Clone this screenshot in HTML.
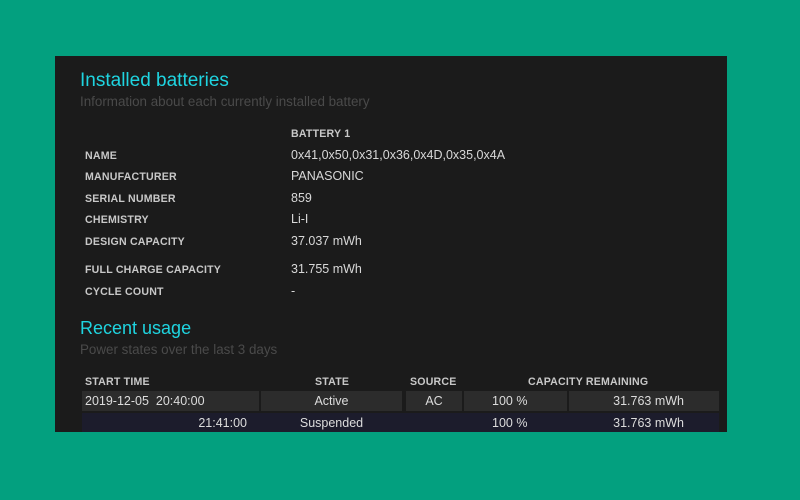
<!DOCTYPE html>
<html><head><style>
body{margin:0;width:800px;height:500px;background:#03a07f;position:relative;overflow:hidden;font-family:"Liberation Sans",sans-serif;}
.p{position:absolute;left:55px;top:56px;width:672px;height:376px;background:#1b1b1b;}
.t{position:absolute;white-space:nowrap;}
h1{position:absolute;margin:0;font-weight:normal;color:#1fd4e0;font-size:18px;}
.sub{color:#4a4a4a;font-size:13.4px;}
.l{color:#c8c8c8;font-size:10.6px;font-weight:bold;letter-spacing:.2px;}
.v{color:#d8d8d8;font-size:12.5px;}
.c{position:absolute;height:20px;line-height:20px;font-size:12.5px;color:#dcdcdc;}
</style></head><body>
<div class="p">
<h1 style="left:25px;top:14px;font-size:19px">Installed batteries</h1>
<div class="t sub" style="left:25px;top:38px">Information about each currently installed battery</div>
<div class="t l" style="left:236px;top:72px">BATTERY 1</div>
<div class="t l" style="left:30px;top:94px">NAME</div><div class="t v" style="left:236px;top:92px">0x41,0x50,0x31,0x36,0x4D,0x35,0x4A</div>
<div class="t l" style="left:30px;top:115px">MANUFACTURER</div><div class="t v" style="left:236px;top:113px">PANASONIC</div>
<div class="t l" style="left:30px;top:137px">SERIAL NUMBER</div><div class="t v" style="left:236px;top:135px">859</div>
<div class="t l" style="left:30px;top:158px">CHEMISTRY</div><div class="t v" style="left:236px;top:156px">Li-I</div>
<div class="t l" style="left:30px;top:180px">DESIGN CAPACITY</div><div class="t v" style="left:236px;top:178px">37.037 mWh</div>
<div class="t l" style="left:30px;top:208px">FULL CHARGE CAPACITY</div><div class="t v" style="left:236px;top:206px">31.755 mWh</div>
<div class="t l" style="left:30px;top:230px">CYCLE COUNT</div><div class="t v" style="left:236px;top:228px">-</div>
<h1 style="left:25px;top:262px">Recent usage</h1>
<div class="t sub" style="left:25px;top:286px">Power states over the last 3 days</div>
<div class="t l" style="left:30px;top:320px">START TIME</div>
<div class="t l" style="left:260px;top:320px">STATE</div>
<div class="t l" style="left:355px;top:320px">SOURCE</div>
<div class="t l" style="left:473px;top:320px">CAPACITY REMAINING</div>
<div class="c" style="left:27px;top:335px;width:174px;background:#2c2c2c;padding-left:3px">2019-12-05&nbsp; 20:40:00</div>
<div class="c" style="left:206px;top:335px;width:141px;background:#2c2c2c;text-align:center">Active</div>
<div class="c" style="left:351px;top:335px;width:56px;background:#2c2c2c;text-align:center">AC</div>
<div class="c" style="left:409px;top:335px;width:103px;background:#2c2c2c;"><span style="padding-left:28px">100 %</span></div>
<div class="c" style="left:514px;top:335px;width:150px;background:#2c2c2c;text-align:right"><span style="padding-right:35px">31.763 mWh</span></div>
<div class="c" style="left:27px;top:357px;width:637px;height:19px;background:#1c1c2c"></div>
<div class="c" style="left:27px;top:357px;width:165px;text-align:right">21:41:00</div>
<div class="c" style="left:206px;top:357px;width:141px;text-align:center">Suspended</div>
<div class="c" style="left:409px;top:357px;"><span style="padding-left:28px">100 %</span></div>
<div class="c" style="left:514px;top:357px;width:150px;text-align:right"><span style="padding-right:35px">31.763 mWh</span></div>
</div>
</body></html>
